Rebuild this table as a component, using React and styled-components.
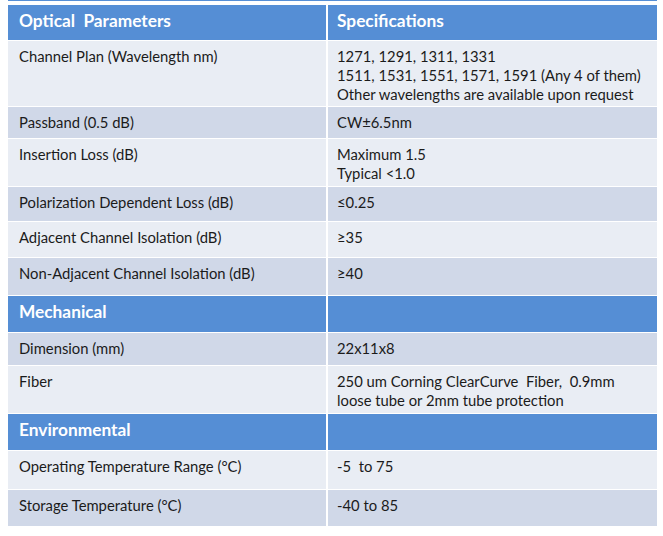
import React from 'react';
import styled, { createGlobalStyle } from 'styled-components';

const GlobalStyle = createGlobalStyle`
  html, body {
    margin: 0;
    padding: 0;
    background: #ffffff;
  }
  body {
    font-family: Lato, "Open Sans", "Liberation Sans", sans-serif;
    color: #1b1b1b;
  }
`;

const Page = styled.div`
  width: 663px;
  height: 536px;
  background: #ffffff;
  padding-left: 8px;
  box-sizing: border-box;
  overflow: hidden;
`;

// тонкая синяя полоска сверху — край предыдущей таблицы
const TopEdge = styled.div`
  width: 649px;
  height: 1px;
  background: #558ed5;
  margin-bottom: 4px;
`;

const Table = styled.div`
  width: 649px;
  display: flex;
  flex-direction: column;
  gap: 1px;
`;

const Row = styled.div`
  display: grid;
  grid-template-columns: 318px 329px;
  column-gap: 2px;
  height: ${(p) => p.$h}px;
`;

const Cell = styled.div`
  box-sizing: border-box;
  padding: ${(p) => (p.$head ? '5px' : '6px')} 6px 0 ${(p) => (p.$right ? '9px' : '11px')};
  background: ${(p) => (p.$head ? '#558ed5' : p.$dark ? '#d0d8e8' : '#e9edf4')};
  color: ${(p) => (p.$head ? '#ffffff' : '#1b1b1b')};
  font-size: ${(p) => (p.$head ? '17.3px' : '14.8px')};
  font-weight: ${(p) => (p.$head ? 700 : 400)};
  line-height: ${(p) => (p.$head ? '21px' : '19px')};
  white-space: pre;
`;

const rows = [
  { head: true, h: 35, left: 'Optical  Parameters', right: 'Specifications' },
  {
    h: 65,
    left: 'Channel Plan (Wavelength nm)',
    right: '1271, 1291, 1311, 1331\n1511, 1531, 1551, 1571, 1591 (Any 4 of them)\nOther wavelengths are available upon request',
  },
  { dark: true, h: 31, left: 'Passband (0.5 dB)', right: 'CW±6.5nm' },
  { h: 47, left: 'Insertion Loss (dB)', right: 'Maximum 1.5\nTypical <1.0' },
  { dark: true, h: 34, left: 'Polarization Dependent Loss (dB)', right: '≤0.25' },
  { h: 35, left: 'Adjacent Channel Isolation (dB)', right: '≥35' },
  { dark: true, h: 37, left: 'Non-Adjacent Channel Isolation (dB)', right: '≥40' },
  { head: true, h: 36, left: 'Mechanical', right: '' },
  { dark: true, h: 32, left: 'Dimension (mm)', right: '22x11x8' },
  {
    h: 47,
    left: 'Fiber',
    right: '250 um Corning ClearCurve  Fiber,  0.9mm\nloose tube or 2mm tube protection',
  },
  { head: true, h: 36, left: 'Environmental', right: '' },
  { h: 38, left: 'Operating Temperature Range (°C)', right: '-5  to 75' },
  { dark: true, h: 36, left: 'Storage Temperature (°C)', right: '-40 to 85' },
];

export default function App() {
  return (
    <Page>
      <GlobalStyle />
      <TopEdge />
      <Table>
        {rows.map((r, i) => (
          <Row key={i} $h={r.h}>
            <Cell $head={r.head} $dark={r.dark}>{r.left}</Cell>
            <Cell $head={r.head} $dark={r.dark} $right>{r.right}</Cell>
          </Row>
        ))}
      </Table>
    </Page>
  );
}
